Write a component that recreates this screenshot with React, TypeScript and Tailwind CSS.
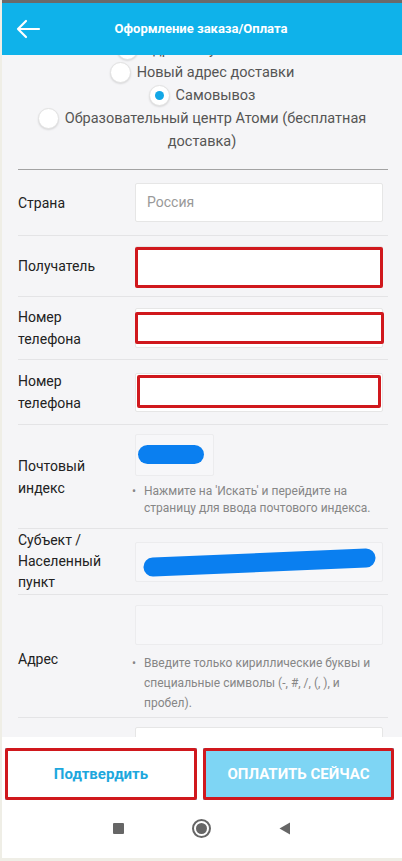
import React from 'react';

const font = { fontFamily: 'Roboto, "Noto Sans", sans-serif' };

type RadioProps = { label: string; checked?: boolean };

const RadioOption: React.FC<RadioProps> = ({ label, checked }) => (
  <div className="text-center leading-[23px]">
    <span className="inline-flex w-[21px] h-[21px] rounded-full bg-white border border-[#e2e2e2] shadow-[0_1px_2px_rgba(0,0,0,0.12)] align-middle mr-[6px] -mt-[2px] items-center justify-center">
      {checked && <span className="w-[9px] h-[9px] rounded-full bg-[#13a7e6]" />}
    </span>
    {label}
  </div>
);

// red marker frame drawn over a field
const Marker: React.FC<{ className: string }> = ({ className }) => (
  <div className={`absolute border-[3px] border-[#d0181d] rounded-[2px] pointer-events-none ${className}`} />
);

const FormRow: React.FC<{ label: React.ReactNode; className?: string; labelClass?: string; children: React.ReactNode }> = ({
  label,
  className = '',
  labelClass = 'leading-[22px]',
  children,
}) => (
  <div className={`flex items-center border-b border-[#e4e4e6] ml-[16px] mr-[14px] ${className}`}>
    <div className={`w-[117px] shrink-0 text-[14px] text-[#222] ${labelClass}`}>{label}</div>
    <div className="flex-1 pr-[5px]">{children}</div>
  </div>
);

const Hint: React.FC<{ children: React.ReactNode; leading: string }> = ({ children, leading }) => (
  <div className={`flex text-[12px] text-[#868686] ${leading}`}>
    <span className="w-[12px] shrink-0 -ml-[3px]">•</span>
    <span>{children}</span>
  </div>
);

export default function App() {
  return (
    <div className="w-[402px] h-[861px] flex flex-col overflow-hidden bg-white border-l-[2px] border-[#efeee6]" style={font}>
      {/* status strip */}
      <div className="h-[3px] bg-[#6a6a6a] shrink-0" />

      {/* header */}
      <div className="h-[52px] shrink-0 bg-[#0fb2ea] flex items-center relative">
        <svg className="absolute left-[13px] top-[14px]" width="26" height="24" viewBox="0 0 26 24" fill="none">
          <path d="M24 12H3M11 4l-8 8 8 8" stroke="white" strokeWidth="2.2" strokeLinecap="round" strokeLinejoin="round" />
        </svg>
        <div className="flex-1 text-center text-white font-bold text-[13px] pr-[2px]">Оформление заказа/Оплата</div>
      </div>

      {/* scrolling content */}
      <div className="flex-1 overflow-hidden bg-[#f5f5f7]">
        <div className="-mt-[17px]">
          <div className="text-[14.5px] text-[#555] px-[16px]">
            <RadioOption label="Адрес по умолчанию" />
            <RadioOption label="Новый адрес доставки" />
            <RadioOption label="Самовывоз" checked />
            <RadioOption label="Образовательный центр Атоми (бесплатная доставка)" />
          </div>
          <div className="h-px bg-[#a3a3a3] ml-[16px] mr-[14px] mt-[16px]" />

          <FormRow label="Страна" className="py-[13px]">
            <div className="h-[39px] bg-white border border-[#e6e6e6] rounded-[2px] flex items-center px-[11px] text-[14px] text-[#999]">
              Россия
            </div>
          </FormRow>

          <FormRow label="Получатель" className="py-[10px]">
            <div className="relative h-[40px] bg-white border border-[#e6e6e6] rounded-[2px]">
              <Marker className="-left-[1px] -right-[1px] top-0 -bottom-[3px]" />
            </div>
          </FormRow>

          <FormRow label={<>Номер<br />телефона</>} className="py-[9px]">
            <div className="relative h-[40px] bg-white border border-[#e6e6e6] rounded-[2px]">
              <Marker className="-left-[1px] -right-[2px] top-[3px] bottom-[3px]" />
            </div>
          </FormRow>

          <FormRow label={<>Номер<br />телефона</>} className="py-[10px]">
            <div className="relative h-[39px] bg-white border border-[#e6e6e6] rounded-[2px]">
              <Marker className="left-[1px] right-[1px] top-[1px] bottom-[3px]" />
            </div>
          </FormRow>

          <FormRow label={<>Почтовый<br />индекс</>} className="pt-[9px] pb-[11px]" labelClass="leading-[22px] mt-[2px]">
            <div className="relative w-[79px] h-[42px] bg-[#f7f7f9] border border-[#ececee] rounded-[2px]">
              <div className="absolute left-[2px] top-[10px] w-[66px] h-[19px] rounded-full bg-[#0a7ff0]" />
            </div>
            <div className="mt-[7px]">
              <Hint leading="leading-[17px]">
                Нажмите на 'Искать' и перейдите на страницу для ввода почтового индекса.
              </Hint>
            </div>
          </FormRow>

          <FormRow label={<>Субъект /<br />Населенный<br />пункт</>} className="py-[1px]" labelClass="leading-[21px]">
            <div className="relative h-[40px] bg-[#f7f7f9] border border-[#ececee] rounded-[2px]">
              <svg className="absolute left-0 top-0" width="250" height="40" viewBox="0 0 250 40">
                <path d="M17 24 L230 15" stroke="#0a7ff0" strokeWidth="19" strokeLinecap="round" />
              </svg>
            </div>
          </FormRow>

          <FormRow label="Адрес" className="pt-[10px] pb-[4px]">
            <div className="h-[40px] bg-[#f7f7f9] border border-[#ececee] rounded-[2px]" />
            <div className="mt-[8px]">
              <Hint leading="leading-[20px]">
                Введите только кириллические буквы и специальные символы (-, #, /, (, ), и пробел).
              </Hint>
            </div>
          </FormRow>

          <FormRow label="" className="pt-[9px]">
            <div className="h-[40px] bg-white border border-[#e6e6e6] rounded-[2px]" />
          </FormRow>
        </div>
      </div>

      {/* action buttons */}
      <div className="shrink-0 bg-white pt-[11px] pl-[3px] pr-[6px] flex gap-[6px]">
        <button className="relative w-[192px] h-[52px] bg-white border border-[#8fd7f2] text-[#1da7dd] font-bold text-[15px]">
          Подтвердить
          <Marker className="-inset-[1px]" />
        </button>
        <button className="relative w-[191px] h-[52px] bg-[#7ed5f4] text-white font-bold text-[15px]">
          ОПЛАТИТЬ СЕЙЧАС
          <Marker className="inset-0" />
        </button>
      </div>

      {/* system navigation */}
      <div className="shrink-0 h-[61px] bg-white flex items-center justify-center gap-[68px] pb-[2px] border-b-[3px] border-[#efeee6]">
        <div className="w-[11px] h-[11px] bg-[#666] rounded-[1px]" />
        <div className="w-[19px] h-[19px] rounded-full border-[2px] border-[#666] flex items-center justify-center">
          <div className="w-[11px] h-[11px] rounded-full bg-[#666]" />
        </div>
        <svg width="12" height="13" viewBox="0 0 12 13">
          <path d="M11 0.5 L0.5 6.5 L11 12.5 Z" fill="#666" />
        </svg>
      </div>
    </div>
  );
}
